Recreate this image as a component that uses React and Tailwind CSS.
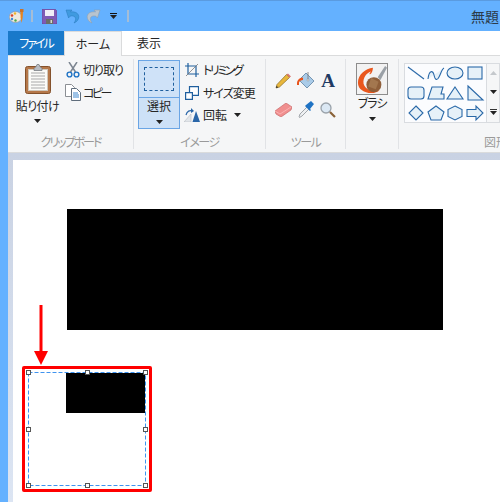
import React from 'react';

const Caret = () => (
  <svg width="7" height="4" viewBox="0 0 7 4" className="block"><path d="M0 0h7L3.500 4z" fill="#222" /></svg>
);

const PaintLogo = () => (
  <svg width="16" height="14" viewBox="0 0 16 14">
    <ellipse cx="6.500" cy="8" rx="6.300" ry="5.500" fill="#efe9de" stroke="#8a8f98" strokeWidth=".6" />
    <circle cx="3" cy="6.500" r="1.300" fill="#d9442c" />
    <circle cx="6" cy="4.500" r="1.200" fill="#f0b429" />
    <circle cx="3" cy="10" r="1.200" fill="#3b8ad9" />
    <circle cx="6.500" cy="11.500" r="1.200" fill="#4aa84a" />
    <path d="M11.500 3h2.500l-.4 6-1 5-1-5z" fill="#e8841f" />
    <path d="M11 0h3.500v3H11z" fill="#c9722a" />
  </svg>
);

const SaveIcon = () => (
  <svg width="15" height="15" viewBox="0 0 15 15">
    <path d="M0 0h13l2 2v13H0z" fill="#7f5bb5" stroke="#5c3f93" strokeWidth=".5" />
    <path d="M3 1h9v6H3z" fill="#f1eef7" />
    <path d="M4 10h7v5H4z" fill="#6b6f66" />
    <path d="M8.500 11H10v3H8.500z" fill="#d8d8d0" />
  </svg>
);

const UndoIcon = ({ color, stroke }) => (
  <svg width="15" height="15" viewBox="0 0 15 15">
    <path d="M1 1h6L5.400 3c3-.6 8 .2 8.400 4.500.2 3-2 5.500-4.800 6.500 1.600-2.200 2.200-4.400 1-6C8.800 6.800 7 6.700 5 7.200L3.600 9z" fill={color} stroke={stroke} strokeWidth=".5" />
  </svg>
);

const PasteIcon = () => (
  <svg width="26" height="30" viewBox="0 0 26 30">
    <rect x=".5" y="2.500" width="25" height="27" rx="2" fill="#b5784a" stroke="#84522c" />
    <rect x="3.500" y="5.500" width="19" height="21" fill="#fbfbf8" stroke="#d0c8bc" />
    <path d="M6 9h14M6 12h14M6 15h14M6 18h14M6 21h14M6 24h14" stroke="#a9a9a9" />
    <path d="M9 4.500l2-2 1-2h2l1 2 2 2v2H9z" fill="#b8bcc2" stroke="#6f7479" strokeWidth=".7" />
  </svg>
);

const CutIcon = () => (
  <svg width="14" height="16" viewBox="0 0 14 16">
    <path d="M3 0l6.500 10M11 0L4.500 10" stroke="#7c8590" strokeWidth="1.500" />
    <circle cx="3.500" cy="12.500" r="2.400" fill="none" stroke="#1f73c4" strokeWidth="1.400" />
    <circle cx="10.500" cy="12.500" r="2.400" fill="none" stroke="#1f73c4" strokeWidth="1.400" />
  </svg>
);

const CopyIcon = () => (
  <svg width="16" height="17" viewBox="0 0 16 17">
    <path d="M.5.5h6l3 3v9h-9z" fill="#fff" stroke="#8b8f94" />
    <path d="M6.500 4.500h5l4 4v8h-9z" fill="#fff" stroke="#5f6d7c" />
    <path d="M8 9h5M8 11h6M8 13h6" stroke="#3c87cf" />
  </svg>
);

const CropIcon = () => (
  <svg width="14" height="14" viewBox="0 0 14 14" fill="none" stroke="#1f5f9e" strokeWidth="1.200">
    <path d="M3 0v11h11M0 3h11v11" />
    <path d="M1 13L13 1" stroke="#777" strokeWidth=".8" />
  </svg>
);

const ResizeIcon = () => (
  <svg width="14" height="14" viewBox="0 0 14 14" fill="none" stroke="#1f5f9e" strokeWidth="1.200">
    <path d="M4.500.6h9v8.800h-9z" fill="#fff" />
    <path d="M.6 6.600h6.800v6.800H.6z" fill="#fff" />
  </svg>
);

const RotateIcon = () => (
  <svg width="16" height="14" viewBox="0 0 16 14">
    <path d="M0 14L7 6v8z" fill="#e2e6ea" stroke="#b9bec4" strokeWidth=".6" />
    <path d="M8.500 14L12 3l4 11z" fill="#2a66a8" />
    <path d="M2 7C3 3 6 2 8 3" fill="none" stroke="#2a66a8" strokeWidth="1.200" />
    <path d="M7 0l3 3-3 2z" fill="#2a66a8" />
  </svg>
);

const PencilIcon = () => (
  <svg width="16" height="16" viewBox="0 0 16 16">
    <path d="M11.500 1.500l3 3L4.500 14 1 15l1-3.500z" fill="#e8b73c" stroke="#8a6a20" strokeWidth=".7" />
    <path d="M11.500 1.500l1.500-1 3 3-1.500 1z" fill="#d9776f" />
    <path d="M1 15l.6-2.200 1.600 1.600z" fill="#333" />
  </svg>
);

const FillIcon = () => (
  <svg width="18" height="17" viewBox="0 0 18 17">
    <path d="M9 1l8 8-7 7-8-8z" fill="#a9cbe8" stroke="#5f83a3" strokeWidth=".8" />
    <path d="M11 0v7" stroke="#777" strokeWidth=".8" />
    <circle cx="11" cy="8" r="1" fill="#fff" stroke="#777" strokeWidth=".5" />
    <path d="M0 13c-.3-5 2-7 6-7.500V8c-2 .2-3.500 1-4 2.500V13z" fill="#e8541c" />
  </svg>
);

const EraserIcon = () => (
  <svg width="17" height="14" viewBox="0 0 17 14">
    <path d="M0 8l11-8 6 4-1 3-10 7-5-3z" fill="#f08f8f" stroke="#c86a6a" strokeWidth=".7" />
    <path d="M0 8l5 3 11-7" fill="none" stroke="#ffc0c0" strokeWidth=".7" />
  </svg>
);

const PickerIcon = () => (
  <svg width="16" height="17" viewBox="0 0 16 17">
    <path d="M9 6l2 2-7 7-2.500 1.500L1 16l1-3z" fill="#eef0f2" stroke="#8d9298" strokeWidth=".8" />
    <path d="M8 4l5-4 3 3-4 5 1 1-1 1-5-5 1-1z" fill="#1f73c4" />
  </svg>
);

const ZoomIcon = () => (
  <svg width="16" height="16" viewBox="0 0 16 16">
    <circle cx="6" cy="6" r="5" fill="#dbe8f4" stroke="#9aa2aa" strokeWidth="1.300" />
    <path d="M10 10l5 5" stroke="#8a6238" strokeWidth="2.200" />
  </svg>
);

const BrushIcon = () => (
  <svg width="32" height="32" viewBox="0 0 32 32" className="border border-[#8c8c8c] block">
    <rect width="32" height="32" fill="#f2f2f2" />
    <path d="M17 4C9 5 1 11 1 20c0 7 7 11 14 11 4 0 7-1 9-3-7 1-15 0-17-7C6 14 11 9 15 8c-2 2-2 3-1 3 2-1 3-5 3-7z" fill="#e9571d" />
    <circle cx="18" cy="22" r="8" fill="#8f5f3a" />
    <path d="M12 24l3-9 8 4-3 8z" fill="#a3774f" />
    <path d="M22 14L30 2l2 2-7 13z" fill="#9aa0a6" />
  </svg>
);

const shapePaths = [
  <path d="M1 1l16 12" />,
  <path d="M1 13c1-9 5-9 6-4s3 6 5 2 3-8 5-9" />,
  <ellipse cx="9" cy="7" rx="8" ry="6" />,
  <rect x="2" y="1" width="14" height="12" />,
  <rect x="1" y="1" width="16" height="12" rx="3" />,
  <path d="M5 1h11l-2 7h3v5H1z" />,
  <path d="M9 1l8 12H1z" />,
  <path d="M2 0l15 14H2z" />,
  <path d="M9 0l7 7-7 7-7-7z" />,
  <path d="M9 0l8 6-3 8H4L1 6z" />,
  <path d="M9 0l7 3.500v7L9 14l-7-3.500v-7z" />,
  <path d="M1 3.500h9V0l7 7-7 7v-3.500H1z" />,
];

const Shape = ({ children }) => (
  <svg width="18" height="14" viewBox="0 0 18 14" fill="#e6f1f8" stroke="#2a69a8" strokeWidth="1.100" className="overflow-visible">
    {children}
  </svg>
);

const GroupLabel = ({ children, className = '' }) => (
  <div className={`absolute bottom-[-1px] left-0 w-full text-center text-[12px] leading-[16px] text-[#9a9a9a] whitespace-nowrap ${className}`}>{children}</div>
);

const SmallRow = ({ icon, text, caret, className = '' }) => (
  <div className="flex items-center h-[22.500px]">
    <div className="w-[18px] flex justify-center">{icon}</div>
    <span className={`ml-[1px] text-[12px] leading-[16px] text-[#262626] whitespace-nowrap ${className}`}>{text}</span>
    {caret && <span className="ml-[7px]"><Caret /></span>}
  </div>
);

export default function App() {
  return (
    <div
      className="relative w-[500px] h-[502px] overflow-hidden bg-[#64b1ff] [font-feature-settings:'palt']"
      style={{ fontFamily: '"Noto Sans CJK JP", "Liberation Sans", sans-serif' }}
    >
      {/* title bar */}
      <div className="h-[31px] border-t border-[#5a9be0] flex items-center pl-[9px] relative">
        <PaintLogo />
        <div className="w-[2px] h-[12px] bg-[#a5bdd6] ml-[6px]" />
        <div className="ml-[9px]"><SaveIcon /></div>
        <div className="ml-[8px]"><UndoIcon color="#3f9ae0" stroke="#2a78bb" /></div>
        <div className="ml-[6px] -scale-x-100"><UndoIcon color="#b8c4d0" stroke="#8e9aa6" /></div>
        <div className="ml-[9px] flex flex-col items-center gap-[1px]">
          <div className="w-[7px] h-px bg-[#111]" />
          <Caret />
        </div>
        <div className="w-[2px] h-[12px] bg-[#a5bdd6] ml-[10px]" />
        <span className="absolute left-[471px] top-[6px] text-[14px] leading-[18px] text-[#2b3a4a] whitespace-nowrap">無題</span>
      </div>

      <div className="ml-[8px]">
        {/* tabs */}
        <div className="h-[24px] bg-white flex relative">
          <div className="w-[56px] bg-[#1979ca] text-white text-[12px] tracking-[-2px] flex items-center justify-center">ファイル</div>
          <div className="w-[58px] h-[25px] bg-[#f5f6f7] border-x border-t border-[#dadbdc] text-[12px] text-[#262626] flex items-center justify-center z-10">ホーム</div>
          <div className="ml-[15px] text-[12px] text-[#262626] flex items-center">表示</div>
        </div>

        {/* ribbon */}
        <div className="h-[98px] bg-[#f5f6f7] border-t border-b border-[#dadbdc] flex">
          {/* clipboard */}
          <div className="relative w-[126px] border-r border-[#e1e3e6] my-[3px] flex">
            <div className="w-[59px] flex flex-col items-center pt-[5px]">
              <PasteIcon />
              <span className="mt-[4px] text-[12px] leading-[16px] tracking-[-0.5px] text-[#262626] whitespace-nowrap">貼り付け</span>
              <span className="mt-[5px]"><Caret /></span>
            </div>
            <div className="flex flex-col -ml-[3px]">
              <SmallRow icon={<CutIcon />} text="切り取り" className="tracking-[-1px]" />
              <SmallRow icon={<CopyIcon />} text="コピー" className="tracking-[-2.500px]" />
            </div>
            <GroupLabel className="tracking-[-2px]">クリップボード</GroupLabel>
          </div>
          {/* image */}
          <div className="relative w-[132px] border-r border-[#e1e3e6] my-[3px] flex">
            <div className="ml-[4px] mt-[1px] w-[42px] h-[69px] border border-[#6aa5e5] bg-[#cde1f7] flex flex-col items-center">
              <div className="w-full h-[37px] border-b border-[#6aa5e5] flex items-center justify-center">
                <div className="w-[30px] h-[24px] border border-dashed border-[#1f5f9e] bg-[#cfe2f8]" />
              </div>
              <span className="text-[12px] leading-[16px] text-[#262626]">選択</span>
              <span className="mt-[6px]"><Caret /></span>
            </div>
            <div className="ml-[3px] flex flex-col">
              <SmallRow icon={<CropIcon />} text="トリミング" className="ml-[2px] tracking-[-2.400px]" />
              <SmallRow icon={<ResizeIcon />} text="サイズ変更" className="ml-[2px] tracking-[-1px]" />
              <SmallRow icon={<RotateIcon />} text="回転" caret className="ml-[2px]" />
            </div>
            <GroupLabel className="tracking-[-1.500px]">イメージ</GroupLabel>
          </div>
          {/* tools */}
          <div className="relative w-[80px] border-r border-[#e1e3e6] my-[3px]">
            <div className="grid grid-cols-[22px_23px_22px] justify-items-center items-center ml-[6px] mt-[13px] gap-y-[12px]">
              <PencilIcon />
              <FillIcon />
              <span className="text-[19px] leading-[16px] font-bold text-[#1f3a63]" style={{ fontFamily: '"Liberation Serif", serif' }}>A</span>
              <EraserIcon />
              <PickerIcon />
              <ZoomIcon />
            </div>
            <GroupLabel className="tracking-[-1.500px]">ツール</GroupLabel>
          </div>
          {/* brush */}
          <div className="relative w-[53px] border-r border-[#e1e3e6] my-[3px] flex flex-col items-center pt-[4px]">
            <BrushIcon />
            <span className="text-[12px] leading-[16px] tracking-[-1px] text-[#262626] whitespace-nowrap">ブラシ</span>
            <span className="mt-[6px]"><Caret /></span>
          </div>
          {/* shapes */}
          <div className="relative flex-1 my-[3px]">
            <div className="ml-[5px] mt-[4px] w-[96px] h-[60px] flex border border-[#d9dce0]">
              <div className="w-[82px] bg-[#fbfcfe] border-r border-[#d9dce0] grid grid-cols-4 grid-rows-[repeat(3,20px)] content-center justify-items-center items-center px-[1px]">
                {shapePaths.map((p, i) => <Shape key={i}>{p}</Shape>)}
              </div>
              <div className="flex-1 flex flex-col items-center justify-between py-[7px] bg-[#f5f6f7]">
                <svg width="7" height="4" viewBox="0 0 7 4"><path d="M3.500 0L7 4H0z" fill="#c4c8cc" /></svg>
                <Caret />
                <div className="flex flex-col items-center gap-[1px]"><div className="w-[7px] h-px bg-[#333]" /><Caret /></div>
              </div>
            </div>
            <div className="absolute bottom-[-1px] left-[85px] text-[12px] leading-[16px] text-[#9a9a9a] whitespace-nowrap">図形</div>
          </div>
        </div>

        {/* canvas area */}
        <div className="h-[349px] bg-gradient-to-b from-[#c9d2e3] to-[#dce5f3] pl-[5px] pt-[7px]">
          <div className="relative h-full bg-white">
            <div className="absolute left-[54px] top-[49px] w-[376px] h-[121px] bg-black" />
            {/* arrow */}
            <svg width="16" height="60" viewBox="0 0 16 60" className="absolute left-[20px] top-[145px]">
              <path d="M6.500 0h3v46h-3z" fill="#ff0000" />
              <path d="M1 46h14l-7 14z" fill="#ff0000" />
            </svg>
            {/* selection */}
            <svg width="120" height="116" viewBox="0 0 120 116" className="absolute left-[14px] top-[211px]">
              <rect x="1.500" y="1.500" width="117" height="113" fill="none" stroke="#3f93ef" strokeDasharray="4 2" />
            </svg>
            <div className="absolute left-[53px] top-[213px] w-[79px] h-[40px] bg-black" />
            {[[15, 212], [74, 212], [132, 212], [15, 269], [132, 269], [15, 325], [74, 325], [132, 325]].map(([x, y]) => (
              <div key={`${x}-${y}`} className="absolute w-[5px] h-[5px] -ml-[2px] -mt-[2px] bg-white border border-[#555]" style={{ left: x, top: y }} />
            ))}
            {/* red frame */}
            <div className="absolute left-[9px] top-[206px] w-[130px] h-[126px] border-[3px] border-[#ff0000] rounded-[2px]" />
          </div>
        </div>
      </div>
    </div>
  );
}
